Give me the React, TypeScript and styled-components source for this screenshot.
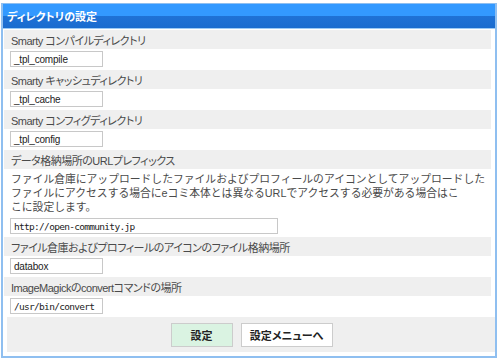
import React from "react";
import styled, { createGlobalStyle } from "styled-components";

const Global = createGlobalStyle`
  html, body { margin: 0; padding: 0; background: #ffffff; }
  body {
    font-family: "Liberation Sans", "Noto Sans CJK JP", sans-serif;
    color: #444444;
  }
`;

const Frame = styled.div`
  margin: 3px 0 0 1px;
  width: 496px;
  height: 355px;
  box-sizing: border-box;
  border: 2px solid #8fbff0;
  border-top-width: 1px;
  background: #ffffff;
  display: flex;
  flex-direction: column;
`;

const Header = styled.div`
  height: 24px;
  background: linear-gradient(to bottom, #3399ff 0, #3399ff 12px, #1f72d6 12px, #1a6ccf 24px);
  border-bottom: 1px solid #9ccaf5;
  display: flex;
  align-items: center;
  padding-left: 4px;
  color: #ffffff;
  font-weight: bold;
  font-size: 11px;
  font-feature-settings: "palt";
`;

const Body = styled.div`
  padding: 1px 4px 0 1px;
  display: flex;
  flex-direction: column;
`;

const Label = styled.div`
  height: 19px;
  background: #efefef;
  display: flex;
  align-items: center;
  padding-left: 7px;
  font-size: 11px;
  letter-spacing: -0.5px;
  font-feature-settings: "palt";
  white-space: nowrap;
  color: #4a4a4a;
`;

const Field = styled.div`
  background: #ffffff;
  padding: 2px 0 3px 6px;
  display: flex;
  flex-direction: column;
  align-items: flex-start;
`;

const Desc = styled.div`
  padding: 1px 0 4px 1px;
  font-size: 10.8px;
  line-height: 14px;
  white-space: nowrap;
  color: #4a4a4a;
`;

const Input = styled.div<{ $w: number; $mono?: boolean }>`
  width: ${(p) => p.$w}px;
  height: 16px;
  box-sizing: border-box;
  border: 1px solid #c8c8c8;
  background: #ffffff;
  display: flex;
  align-items: center;
  padding-left: 3px;
  font-size: ${(p) => (p.$mono ? "9.5px" : "10px")};
  letter-spacing: ${(p) => (p.$mono ? "-0.7px" : "-0.2px")};
  font-family: ${(p) =>
    p.$mono ? '"DejaVu Sans Mono", monospace' : '"Liberation Sans", sans-serif'};
  color: #222222;
  white-space: nowrap;
`;

const Actions = styled.div`
  margin-left: 4px;
  height: 35px;
  background: #efefef;
  display: flex;
  justify-content: center;
  align-items: center;
  gap: 8px;
  padding-left: 1px;
`;

const Button = styled.button<{ $primary?: boolean; $w: number }>`
  width: ${(p) => p.$w}px;
  height: 24px;
  border: 1px solid #cccccc;
  background: ${(p) => (p.$primary ? "#daf3e2" : "#ffffff")};
  font-family: "Noto Sans CJK JP", sans-serif;
  font-weight: bold;
  font-size: 11px;
  font-feature-settings: "palt";
  color: #222222;
  padding: 0;
  margin: 0;
`;

const fields = [
  { label: "Smarty コンパイルディレクトリ", value: "_tpl_compile", w: 93 },
  { label: "Smarty キャッシュディレクトリ", value: "_tpl_cache", w: 93 },
  { label: "Smarty コンフィグディレクトリ", value: "_tpl_config", w: 93 },
];

export default function App() {
  return (
    <>
      <Global />
      <Frame>
        <Header>ディレクトリの設定</Header>
        <Body>
          {fields.map((f) => (
            <React.Fragment key={f.label}>
              <Label>{f.label}</Label>
              <Field>
                <Input $w={f.w}>{f.value}</Input>
              </Field>
            </React.Fragment>
          ))}
          <Label>データ格納場所のURLプレフィックス</Label>
          <Field>
            <Desc>
              ファイル倉庫にアップロードしたファイルおよびプロフィールのアイコンとしてアップロードした
              <br />
              ファイルにアクセスする場合にeコミ本体とは異なるURLでアクセスする必要がある場合はこ
              <br />
              こに設定します。
            </Desc>
            <Input $w={268} $mono>
              http://open-community.jp
            </Input>
          </Field>
          <Label>ファイル倉庫およびプロフィールのアイコンのファイル格納場所</Label>
          <Field>
            <Input $w={93}>databox</Input>
          </Field>
          <Label>ImageMagickのconvertコマンドの場所</Label>
          <Field>
            <Input $w={93} $mono>
              /usr/bin/convert
            </Input>
          </Field>
        </Body>
        <Actions>
          <Button $primary $w={62}>設定</Button>
          <Button $w={92}>設定メニューへ</Button>
        </Actions>
      </Frame>
    </>
  );
}
